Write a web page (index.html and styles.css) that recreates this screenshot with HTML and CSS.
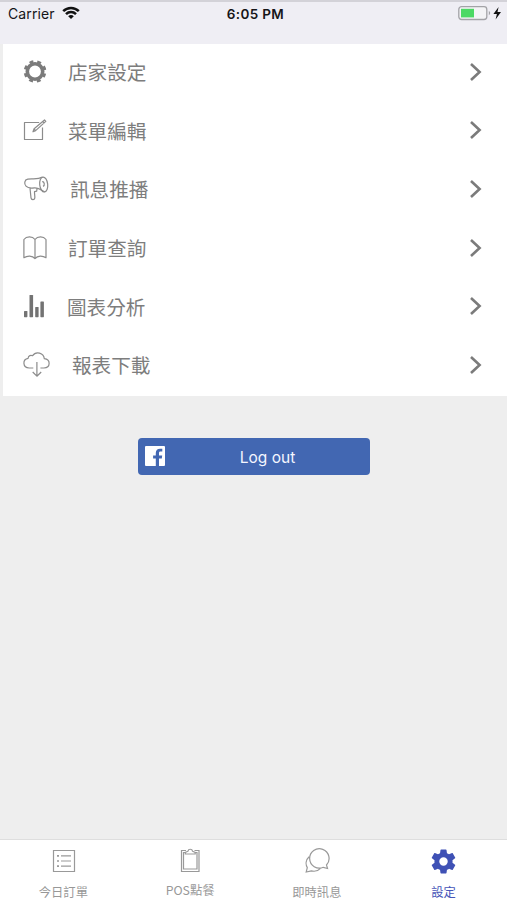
FILE: index.html
```html
<!DOCTYPE html>
<html lang="zh-Hant">
<head>
<meta charset="utf-8">
<title>設定</title>
<link rel="stylesheet" href="styles.css">
</head>
<body>
<header class="status">
  <div class="carrier"><span>Carrier</span>
    <svg width="18" height="14" viewBox="0 0 18 14" fill="none" stroke="#111" stroke-width="2.5"><path d="M1.2 5.2C5.6.8 12.4.8 16.8 5.2M4 8.1c2.8-2.8 7.2-2.8 10 0"/><path d="M9 13 6.2 10.2c1.6-1.5 4-1.5 5.6 0z" fill="#111" stroke="none"/></svg>
  </div>
  <div class="time">6:05 PM</div>
  <div class="power">
    <svg width="45" height="16" viewBox="0 0 45 16"><rect x=".8" y="1.7" width="28" height="12.8" rx="2.8" fill="#f4f4f6" stroke="#a3a3a7" stroke-width="1.3"/><rect x="3" y="3.8" width="13" height="8.6" fill="#4cd964"/><path d="M30.8 6v4.2q1.4-.5 1.4-2.1T30.8 6z" fill="#a3a3a7"/><path d="M40.6 2 35.4 9h3.5l-1.3 5.4 5.4-7.3h-3.5z" fill="#111"/></svg>
  </div>
</header>
<main>
  <ul class="menu">
    <li class="row">
      <svg class="icon" viewBox="0 0 30 30" fill="none" stroke="#7b7b7b"><circle cx="12" cy="14.5" r="7.7" stroke-width="3.6"/><circle cx="12" cy="14.5" r="10" stroke-width="2.6" stroke-dasharray="3.9 3.954" stroke-dashoffset="-1.98"/></svg>
      <span class="label">店家設定</span><svg class="chevron" viewBox="0 0 14 20"><path d="m2 2 8.6 8L2 18"/></svg>
    </li>
    <li class="row">
      <svg class="icon thin" viewBox="0 0 30 30"><path d="M16.2 7.5H1.5v17h18v-12"/><path d="M10 16.8l1.1-3L21.5 5l1.3 1.4-10.2 9.2zM11.1 13.8l1.5 1.8M19.7 6.5l1.4 1.5"/></svg>
      <span class="label">菜單編輯</span><svg class="chevron" viewBox="0 0 14 20"><path d="m2 2 8.6 8L2 18"/></svg>
    </li>
    <li class="row">
      <svg class="icon thin" viewBox="0 0 30 30"><ellipse cx="20.7" cy="10.5" rx="4" ry="7.5" transform="rotate(-6 20.7 10.5)"/><path d="M19.5 3.1C14.5 6 9.5 4.3 4.8 5.1 1.2 5.7 1 10 3 12.2c1.7 1.9 4.9 2.1 8.3 1.7 3.8-.4 6.9 2 10.2 4M7 14.3l1 9.6c.3 2.2 3.4 2.3 3.8.2.2-2.1-.4-4.4-.3-6.4l2.2-.5.3-3M19.2 7.6c2.2-.2 3 3.9.8 4.8"/></svg>
      <span class="label shift-two">訊息推播</span><svg class="chevron" viewBox="0 0 14 20"><path d="m2 2 8.6 8L2 18"/></svg>
    </li>
    <li class="row">
      <svg class="icon thin" viewBox="0 0 30 30"><path d="M12 6.5C9.3 3 3.5 3.2.9 6.5v18.2c3.3-2.2 8.5-2.4 11.1.9V6.5C14.7 3 20.4 3.2 23 6.5v18.2c-3.3-2.2-8.4-2.4-11 .9"/></svg>
      <span class="label">訂單查詢</span><svg class="chevron" viewBox="0 0 14 20"><path d="m2 2 8.6 8L2 18"/></svg>
    </li>
    <li class="row">
      <svg class="icon" viewBox="0 0 30 30" fill="#737373"><rect x="1" y="20" width="3.4" height="6.2" rx=".6"/><rect x="6.5" y="4" width="3.6" height="22.2" rx=".6"/><rect x="12.2" y="16" width="3.4" height="10.2" rx=".6"/><rect x="17.4" y="10.5" width="3.5" height="15.7" rx=".6"/></svg>
      <span class="label shift-back">圖表分析</span><svg class="chevron" viewBox="0 0 14 20"><path d="m2 2 8.6 8L2 18"/></svg>
    </li>
    <li class="row">
      <svg class="icon thin" viewBox="0 0 30 30"><path d="M10.3 18H6.2c-6.8-.3-6.9-8.8-1.1-9.7C5.3 5.3 8 4.9 9.6 5.7c3.4-5.2 11.2-2.8 11.7 3 6.5.7 6.5 9.1-.4 9.3H17.4M13.9 12v14M9.7 22l4.2 4.2 4.3-4.2"/></svg>
      <span class="label shift-four">報表下載</span><svg class="chevron" viewBox="0 0 14 20"><path d="m2 2 8.6 8L2 18"/></svg>
    </li>
  </ul>
  <button class="logout">
    <svg class="facebook" viewBox="0 0 20 20"><rect width="20" height="20" rx="1" fill="#fff"/><path d="M10.8 20v-7.5H8.1V9.4h2.7V7.1c0-2.9 1.7-4.4 4.3-4.4l2.2.1v2.8h-1.6c-1.4 0-1.7.7-1.7 1.7v2.1h3.2l-.4 3.1H14V20z" fill="#4267b2"/></svg>
    <span>Log out</span>
  </button>
</main>
<nav class="tabs">
  <a class="tab"><svg viewBox="0 0 28 28"><path d="M4.5 3.5h21v21h-21zM12 8.8h10M12 14h10M12 19.2h10"/><path d="M8 8.8h2M8 14h2M8 19.2h2" stroke-width="1.7"/></svg><span>今日訂單</span></a>
  <a class="tab"><svg viewBox="0 0 28 28"><path d="M10 3.5H5.5v21h17.5v-21h-4.5M9.5 5.5H7.5v16.5H21V5.5h-2M9.3 7V5.4l2.7-1.2c.4-2.6 4.1-2.6 4.5 0l2.7 1.2V7z"/></svg><span class="pos">POS點餐</span></a>
  <a class="tab"><svg viewBox="0 0 28 28"><path d="M24.5 21.5l-4.2-1.2A9.7 9.7 0 1 1 23.5 18zM6.1 9.8c-3.3 3-3.8 7.4-1.8 10.8L3.2 25l5.1-1.1c3.5.8 7-.1 9.2-2.5"/></svg><span>即時訊息</span></a>
  <a class="tab active"><svg class="gear" viewBox="0 0 24 24"><path d="M19.43 12.98c.04-.32.07-.64.07-.98s-.03-.66-.07-.98l2.11-1.65c.19-.15.24-.42.12-.64l-2-3.46c-.12-.22-.39-.3-.61-.22l-2.49 1c-.52-.4-1.08-.73-1.69-.98l-.38-2.65A.49.49 0 0 0 14 2h-4c-.25 0-.46.18-.49.42l-.38 2.65c-.61.25-1.17.59-1.69.98l-2.49-1c-.23-.09-.49 0-.61.22l-2 3.46c-.13.22-.07.49.12.64l2.11 1.65c-.04.32-.07.65-.07.98s.03.66.07.98l-2.11 1.65c-.19.15-.24.42-.12.64l2 3.46c.12.22.39.3.61.22l2.49-1c.52.4 1.08.73 1.69.98l.38 2.65c.03.24.24.42.49.42h4c.25 0 .46-.18.49-.42l.38-2.65c.61-.25 1.17-.59 1.69-.98l2.49 1c.23.09.49 0 .61-.22l2-3.46c.12-.22.07-.49-.12-.64zM12 15.5A3.5 3.5 0 1 1 12 8.5a3.5 3.5 0 0 1 0 7z"/></svg><span>設定</span></a>
</nav>
</body>
</html>
```
FILE: styles.css
```css
* { box-sizing: border-box; }
body {
  margin: 0;
  height: 900px;
  display: flex;
  flex-direction: column;
  overflow: hidden;
  background: #eee;
  font-family: Inter, "Noto Sans CJK TC", sans-serif;
}
.status {
  height: 44px;
  flex: none;
  display: grid;
  grid-template-columns: 1fr auto 1fr;
  align-items: start;
  padding: 5px 4px 0 8px;
  background: #efeef4;
  border-top: 2px solid #d3d2d8;
  color: #151518;
  font-size: 14px;
  line-height: 16px;
}
.status > * { margin-top: -1px; }
.carrier { display: flex; gap: 7px; letter-spacing: .1px; }
.time { font-weight: 600; font-size: 13.5px; letter-spacing: .35px; }
.power { justify-self: end; height: 16px; }
.power svg { display: block; margin-top: -1px; }
main { flex: 1; display: flex; flex-direction: column; align-items: center; }
.menu {
  align-self: stretch;
  list-style: none;
  margin: 0 0 0 3px;
  padding: 0;
  background: #fff;
}
.row {
  height: 58.6px;
  display: flex;
  align-items: center;
  padding: 0 24px 3px 20px;
}
.icon { width: 30px; height: 30px; flex: none; }
.thin { fill: none; stroke: #8c8c8c; stroke-width: 1.2; stroke-linejoin: round; }
.label {
  flex: 1;
  margin-left: 15px;
  padding-top: 3px;
  color: #7d7d7d;
  font-size: 19.6px;
  font-weight: 400;
  line-height: 28px;
}
.shift-two { margin-left: 17px; }
.shift-back { margin-left: 14px; }
.shift-four { margin-left: 19px; }
.chevron { width: 14px; height: 20px; fill: none; stroke: #7b7b7b; stroke-width: 2.6; }
.logout {
  width: 232px;
  height: 37px;
  margin-top: 42px;
  display: flex;
  align-items: center;
  padding: 0 8px 0 7px;
  border: 0;
  border-radius: 4px;
  background: #4267b2;
  color: #f4f6ff;
  font: 15.5px Inter, sans-serif;
}
.logout span { flex: 1; padding: 2px 0 0 9px; text-align: center; }
.facebook { width: 20px; height: 20px; }
.tabs {
  height: 61px;
  flex: none;
  display: flex;
  background: #fff;
  border-top: 1px solid #dedede;
}
.tab {
  flex: 1;
  display: flex;
  flex-direction: column;
  align-items: center;
  padding-top: 7px;
  color: #989898;
  font-size: 12.3px;
  line-height: 14px;
}
.tab svg { flex: none; width: 28px; height: 28px; fill: none; stroke: #999; stroke-width: 1.2; }
.tab span { margin-top: 11px; }
.tab .pos { margin-top: 8px; font-family: "Noto Sans CJK TC", sans-serif; }
.tab .gear { width: 29px; height: 29px; margin: 0 0 -1px; fill: #3f51b5; stroke: none; }
.active { color: #4655b8; }
```
